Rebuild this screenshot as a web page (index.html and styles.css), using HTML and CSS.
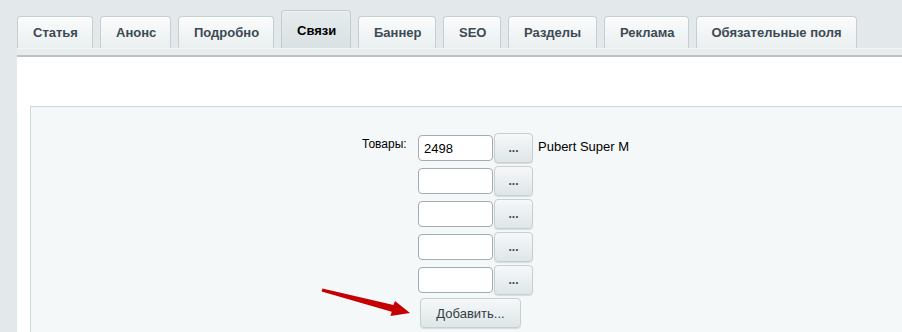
FILE: index.html
```html
<!DOCTYPE html>
<html lang="ru">
<head>
<meta charset="utf-8">
<link rel="stylesheet" href="styles.css">
</head>
<body>
<div class="page">
  <div class="tabs">
    <div class="tab">Статья</div>
    <div class="tab">Анонс</div>
    <div class="tab">Подробно</div>
    <div class="tab active">Связи</div>
    <div class="tab">Баннер</div>
    <div class="tab">SEO</div>
    <div class="tab">Разделы</div>
    <div class="tab">Реклама</div>
    <div class="tab">Обязательные поля</div>
  </div>
  <div class="strip"></div>
  <div class="content">
    <div class="panel">
      <div class="form">
        <div class="label">Товары:</div>
        <div class="fields">
          <div class="row"><input class="inp" value="2498"><button class="dots">...</button><span class="name">Pubert Super M</span></div>
          <div class="row"><input class="inp" value=""><button class="dots">...</button></div>
          <div class="row"><input class="inp" value=""><button class="dots">...</button></div>
          <div class="row"><input class="inp" value=""><button class="dots">...</button></div>
          <div class="row"><input class="inp" value=""><button class="dots">...</button></div>
          <div class="row"><button class="add">Добавить...</button></div>
        </div>
      </div>
    </div>
  </div>
  <svg class="arrow" width="902" height="332" viewBox="0 0 902 332">
    <polygon points="322.4,288.5 393.5,305 395,301 410,313 390.5,316 391.7,311.8 321.6,291.5" fill="#c40000"/>
  </svg>
</div>
</body>
</html>
```
FILE: styles.css
```css
html, body {
  margin: 0;
  padding: 0;
}
body {
  background: #e3e9eb;
  font-family: Arial, "Liberation Sans", sans-serif;
  width: 902px;
  height: 332px;
  overflow: hidden;
}
.page {
  position: relative;
  padding-top: 10px;
  padding-left: 17px;
  height: 332px;
  box-sizing: border-box;
}
.tabs {
  display: flex;
  align-items: flex-end;
  gap: 7px;
  height: 38px;
}
.tab {
  box-sizing: border-box;
  height: 32px;
  padding: 0 15px;
  border: 1px solid #c5ced1;
  border-bottom: none;
  border-radius: 4px 4px 0 0;
  background: linear-gradient(#fbfcfc, #eaeff0);
  color: #3d4a54;
  font-weight: bold;
  font-size: 13px;
  line-height: 31px;
  text-align: center;
  box-shadow: inset 0 1px 0 #fff;
}
.tab:nth-child(1) { width: 76px; }
.tab:nth-child(2) { width: 71px; }
.tab:nth-child(3) { width: 96px; }
.tab:nth-child(4) { width: 70px; }
.tab:nth-child(5) { width: 78px; }
.tab:nth-child(6) { width: 58px; }
.tab:nth-child(7) { width: 89px; }
.tab:nth-child(8) { width: 85px; }
.tab:nth-child(9) { width: 161px; padding: 0; }
.tab.active {
  height: 38px;
  line-height: 40px;
  background: linear-gradient(#e6ecee, #d9e1e3);
  color: #000;
  border-color: #c2cbce;
  box-shadow: inset 0 1px 0 #eff3f4;
}
.strip {
  height: 6px;
  background: #e7eced;
  border-top: 1px solid #f4f7f7;
  border-bottom: 2px solid #b9c3c6;
}
.content {
  background: #fff;
  padding: 49px 0 0 13px;
  height: 275px;
  box-sizing: border-box;
}
.panel {
  background: #f5f8f9;
  border-top: 1px solid #ced7da;
  border-left: 1px solid #ced7da;
  height: 226px;
  padding-top: 26px;
  box-sizing: border-box;
}
.form {
  display: flex;
  padding-left: 331px;
}
.label {
  width: 48px;
  font-size: 12px;
  color: #000;
  padding-top: 4px;
  text-align: left;
  margin-right: 8px;
}
.fields {
  display: flex;
  flex-direction: column;
  gap: 3px;
}
.row {
  display: flex;
  align-items: center;
  height: 30px;
}
.inp {
  box-sizing: border-box;
  width: 75px;
  height: 26px;
  border: 1px solid #a4adb4;
  border-radius: 4px;
  background: #fff;
  font-family: Arial, "Liberation Sans", sans-serif;
  font-size: 13px;
  color: #000;
  padding: 0 5px;
  margin: 0 1px 0 0;
  outline: none;
}
.dots, .add {
  box-sizing: border-box;
  height: 30px;
  border: 1px solid #c6cfd2;
  border-radius: 4px;
  background: linear-gradient(#f6f8f9, #dfe6e8);
  box-shadow: 0 1px 1px rgba(0,0,0,0.12);
  font-family: Arial, "Liberation Sans", sans-serif;
  color: #3d4a54;
  padding: 0;
  margin: 0;
}
.dots {
  width: 39px;
  font-size: 12px;
  font-weight: bold;
  line-height: 28px;
}
.name {
  margin-left: 5px;
  font-size: 13px;
  color: #000;
  align-self: flex-start;
  padding-top: 6px;
}
.add {
  width: 101px;
  margin-left: 2px;
  font-size: 13px;
  color: #333d44;
}
.arrow {
  position: absolute;
  left: 0;
  top: 0;
  pointer-events: none;
}
```
